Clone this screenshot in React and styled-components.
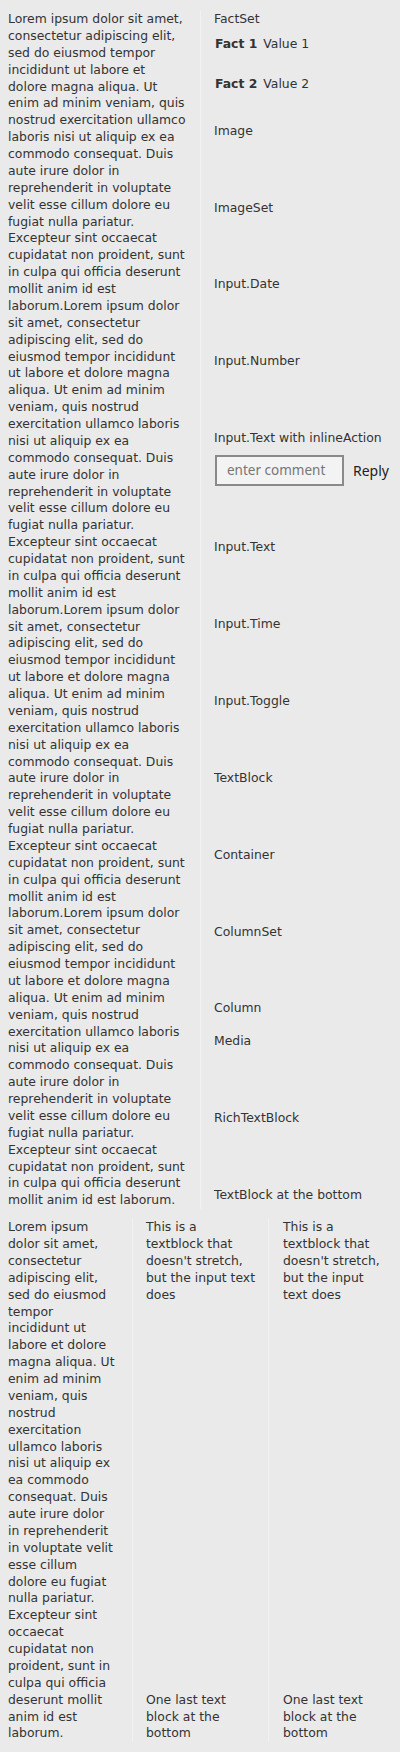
import React from 'react';
import styled, { createGlobalStyle } from 'styled-components';

const LOREM =
  'Lorem ipsum dolor sit amet, consectetur adipiscing elit, sed do eiusmod tempor incididunt ut labore et dolore magna aliqua. Ut enim ad minim veniam, quis nostrud exercitation ullamco laboris nisi ut aliquip ex ea commodo consequat. Duis aute irure dolor in reprehenderit in voluptate velit esse cillum dolore eu fugiat nulla pariatur. Excepteur sint occaecat cupidatat non proident, sunt in culpa qui officia deserunt mollit anim id est laborum.';

// label + the space above it, in px
const items = [
  { label: 'Image', gap: 30 },
  { label: 'ImageSet', gap: 60 },
  { label: 'Input.Date', gap: 60 },
  { label: 'Input.Number', gap: 60 },
];

const itemsAfterInput = [
  { label: 'Input.Text', gap: 53.6 },
  { label: 'Input.Time', gap: 60 },
  { label: 'Input.Toggle', gap: 60 },
  { label: 'TextBlock', gap: 60 },
  { label: 'Container', gap: 60 },
  { label: 'ColumnSet', gap: 60 },
  { label: 'Column', gap: 60 },
  { label: 'Media', gap: 16 },
  { label: 'RichTextBlock', gap: 60 },
  { label: 'TextBlock at the bottom', gap: 60 },
];

export default function App() {
  return (
    <>
      <GlobalStyle />
      <Card>
        <ColumnSet count={2}>
          <Column>
            <Text>{LOREM.repeat(4)}</Text>
          </Column>
          <Separator />
          <Column>
            <Label>FactSet</Label>
            <FactRow gap={8}>
              <FactTitle>Fact 1</FactTitle>
              <span>Value 1</span>
            </FactRow>
            <FactRow gap={23}>
              <FactTitle>Fact 2</FactTitle>
              <span>Value 2</span>
            </FactRow>
            {items.map((it) => (
              <Label key={it.label} gap={it.gap}>
                {it.label}
              </Label>
            ))}
            <Label gap={60}>Input.Text with inlineAction</Label>
            <InlineRow>
              <CommentInput placeholder="enter comment" />
              <ReplyButton>Reply</ReplyButton>
            </InlineRow>
            {itemsAfterInput.map((it) => (
              <Label key={it.label} gap={it.gap}>
                {it.label}
              </Label>
            ))}
          </Column>
        </ColumnSet>

        <ColumnSet count={3} gap={10}>
          <Column trim={4}>
            <Text>{LOREM}</Text>
          </Column>
          <Separator />
          <StretchColumn indent={2}>
            <Text>This is a textblock that doesn't stretch, but the input text does</Text>
            <Text>One last text block at the bottom</Text>
          </StretchColumn>
          <Separator />
          <StretchColumn indent={3} trim={7}>
            <Text>This is a textblock that doesn't stretch, but the input text does</Text>
            <Text>One last text block at the bottom</Text>
          </StretchColumn>
        </ColumnSet>
      </Card>
    </>
  );
}

const GlobalStyle = createGlobalStyle`
  html, body {
    margin: 0;
    background: #eaeaea;
  }
  body {
    font-family: "DejaVu Sans", sans-serif;
    font-size: 12.4px;
    line-height: 16.875px;
    color: #333;
  }
`;

const Card = styled.div`
  padding: 11px 8px 9px;
`;

const ColumnSet = styled.div`
  display: grid;
  grid-template-columns: ${(p) =>
    Array.from({ length: p.count }, () => 'minmax(0, 1fr)').join(' 24px ')};
  align-items: stretch;
  margin-top: ${(p) => p.gap || 0}px;
`;

const Column = styled.div`
  min-width: 0;
  display: flex;
  flex-direction: column;
  padding-left: ${(p) => p.indent || 0}px;
  padding-right: ${(p) => p.trim || 0}px;
`;

const StretchColumn = styled(Column)`
  justify-content: space-between;
`;

const Separator = styled.div`
  justify-self: center;
  width: 1px;
  background: #f1f1f1;
`;

const Text = styled.div`
  white-space: normal;
  word-wrap: break-word;
`;

const Label = styled.div`
  padding-left: 2px;
  margin-top: ${(p) => p.gap || 0}px;
`;

const FactRow = styled.div`
  display: flex;
  gap: 6px;
  padding-left: 3px;
  margin-top: ${(p) => p.gap || 0}px;
`;

const FactTitle = styled.span`
  font-weight: bold;
`;

const InlineRow = styled.div`
  display: flex;
  align-items: center;
  gap: 9px;
  margin-top: 7.6px;
  padding-left: 3px;
`;

const CommentInput = styled.input`
  box-sizing: border-box;
  width: 129px;
  height: 31px;
  border: 2px solid #8a8a8a;
  background: #f3f3f3;
  padding: 0 10px;
  font-family: "Noto Sans", "Open Sans", sans-serif;
  font-size: 13.5px;
  color: #333;
  outline: none;
  &::placeholder {
    color: #767676;
  }
`;

const ReplyButton = styled.button`
  border: 0;
  background: transparent;
  padding: 0;
  font-family: "Noto Sans", "Open Sans", sans-serif;
  font-size: 14px;
  color: #222;
  cursor: pointer;
`;
